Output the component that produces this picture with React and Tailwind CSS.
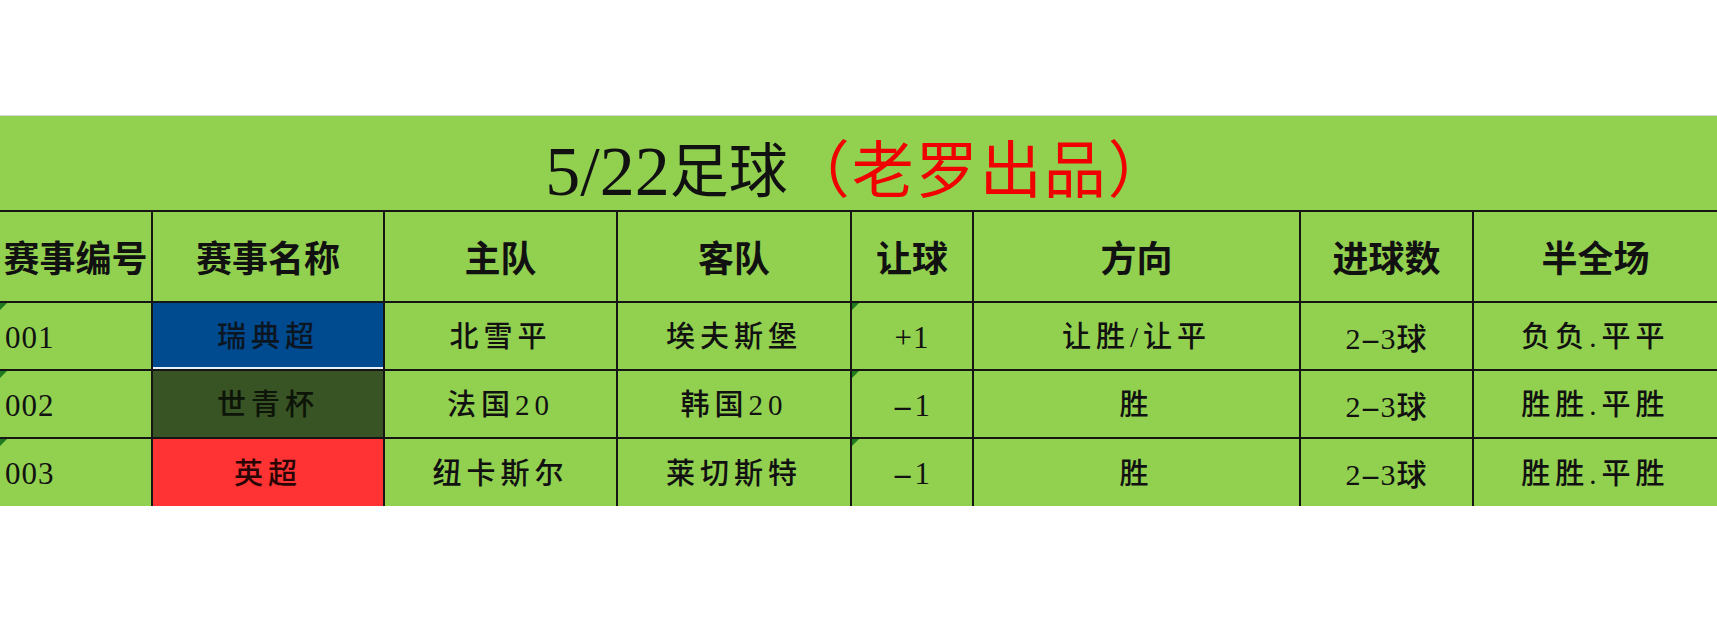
import React from "react";

const cols = "grid grid-cols-[151px_232px_233px_234px_122px_327px_173px_245px]";
const font = "font-['Liberation_Serif','Noto_Sans_CJK_SC',serif]";

const headers = ["赛事编号", "赛事名称", "主队", "客队", "让球", "方向", "进球数", "半全场"];

const rows = [
	{ id: "001", league: "瑞典超", bg: "bg-[#004a8f]", fg: "text-[#0b1622]", home: "北雪平", away: "埃夫斯堡", hcp: "+1", dir: "让胜/让平", hf: "负负.平平", line: true },
	{ id: "002", league: "世青杯", bg: "bg-[#385324]", fg: "text-[#0d1408]", home: "法国20", away: "韩国20", hcp: "-1", dir: "胜", hf: "胜胜.平胜" },
	{ id: "003", league: "英超", bg: "bg-[#ff3333]", fg: "text-[#2a0505]", home: "纽卡斯尔", away: "莱切斯特", hcp: "-1", dir: "胜", hf: "胜胜.平胜" },
];

// wide dash like the spreadsheet's font
function Dash({ className = "mx-[5px]" }) {
	return <span className={`inline-block scale-x-[2] ${className}`}>-</span>;
}

function Flag() {
	return <span className="absolute left-0 top-0 w-0 h-0 border-t-[7px] border-t-[#1f7a1f] border-r-[7px] border-r-transparent" />;
}

function Cell({ children, className = "", first = false, flag = false }) {
	return (
		<div className={`relative flex items-center ${first ? "justify-start pl-[5px]" : "justify-center border-l-2 border-[#151515]"} ${className}`}>
			{flag && <Flag />}
			{children}
		</div>
	);
}

export default function App() {
	return (
		<div className={`w-[1717px] h-[634px] bg-white overflow-hidden pt-[115px] ${font} text-[#111]`}>
			<div className="h-[1px] bg-[#d6d6d6]" />
			<div className="bg-[#92d050]">
				{/* title */}
				<div className="h-[94px] flex items-center justify-center pt-[18px] leading-none whitespace-nowrap">
					<span className="text-[70px]">5/22</span>
					<span className="text-[59px]">足球</span>
					<span className="text-[62px] tracking-[2px] text-[#f00000]">（老罗出品）</span>
				</div>

				{/* header */}
				<div className={`${cols} h-[91px] border-t-2 border-[#151515] text-[36px] font-semibold`}>
					{headers.map((h, i) => (
						<Cell key={h} className={i === 0 ? "!justify-center !pl-0 whitespace-nowrap" : ""} first={i === 0}>
							<span className="pt-[6px]">{h}</span>
						</Cell>
					))}
				</div>

				{/* data */}
				{rows.map((r, idx) => (
					<div key={r.id} className={`${cols} ${idx === 2 ? "h-[69px]" : "h-[68px]"} border-t-2 border-[#151515] text-[29px] font-medium tracking-[5px]`}>
						<Cell first flag>
							<span className="tracking-[1px] text-[31px] pt-[4px]">{r.id}</span>
						</Cell>
						<Cell className={`${r.bg} ${r.fg}`}>
							<span className="pt-[4px]">{r.league}</span>
							{r.line && <span className="absolute left-0 right-0 bottom-0 h-[2px] bg-[#e6f0ff]" />}
						</Cell>
						<Cell><span className="pt-[4px]">{r.home}</span></Cell>
						<Cell><span className="pt-[4px]">{r.away}</span></Cell>
						<Cell flag>
							<span className="pt-[4px] tracking-[1px] text-[31px]">
								{r.hcp[0] === "-" ? <><Dash />1</> : r.hcp}
							</span>
						</Cell>
						<Cell><span className="pt-[4px]">{r.dir}</span></Cell>
						<Cell><span className="pt-[4px] text-[30px] tracking-[1px]">2<Dash className="mx-[4px]" />3球</span></Cell>
						<Cell><span className="pt-[4px]">{r.hf}</span></Cell>
					</div>
				))}
			</div>
		</div>
	);
}
